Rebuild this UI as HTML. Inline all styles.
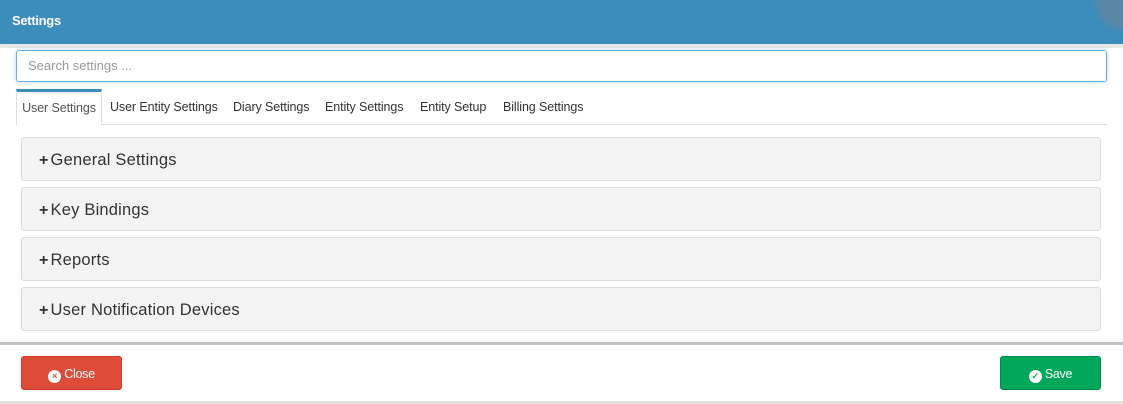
<!DOCTYPE html>
<html><head><style>
body{margin:0;width:1123px;height:404px;background:#fff;font-family:"Liberation Sans",sans-serif;position:relative;overflow:hidden}
.hdr{position:absolute;left:0;top:0;width:1123px;height:44px;background:#3c8dbc;color:#fff;font-weight:bold;font-size:13px;line-height:42px;padding-left:12px;box-sizing:border-box;letter-spacing:-0.3px}
.circ{position:absolute;left:1095px;top:-30px;width:60px;height:60px;border-radius:50%;background:#5a87a6;filter:blur(3px)}
.band{position:absolute;left:0;top:44px;width:1123px;height:4px;background:#e6e6e6}
.search{position:absolute;left:16px;top:50px;width:1091px;height:32px;border:1px solid #66afe9;border-radius:3px;box-sizing:border-box;box-shadow:0 0 4px rgba(102,175,233,.5);font-size:13px;color:#999;padding-left:11px;line-height:30px}
.tabs{position:absolute;left:16px;top:89px;width:1091px;height:36px;border-bottom:1px solid #ddd;box-sizing:border-box;font-size:12.5px;color:#333}
.tab{position:absolute;top:0;height:35px;line-height:36px;letter-spacing:-0.1px}
.act{left:0;width:86px;border-top:3px solid #3c8dbc;border-left:1px solid #ddd;border-right:1px solid #ddd;box-sizing:border-box;height:36px;background:#fff;line-height:32px;text-align:center;color:#555}
.p{position:absolute;left:21px;width:1080px;height:44px;background:#f4f4f4;border:1px solid #ddd;border-radius:3px;box-sizing:border-box;font-size:16.5px;color:#333;line-height:44px;padding-left:17px;letter-spacing:0.2px}
.p b{font-size:16px;margin-right:2px}
.line{position:absolute;left:0;top:342px;width:1123px;height:3px;background:#c2c2c2}
.btn{position:absolute;top:356px;width:101px;height:34px;border-radius:3px;color:#fff;font-size:12.5px;line-height:34px;text-align:center;box-sizing:border-box;letter-spacing:-0.3px}
.ic{display:inline-block;width:13px;height:13px;border-radius:50%;background:#fff;vertical-align:-1px;margin-right:3px;font-size:9px;line-height:13px;font-weight:bold;letter-spacing:0}
.bot{position:absolute;left:0;top:401px;width:1123px;height:3px;background:#e2e2e2}
</style></head><body>
<div class="hdr">Settings</div><div class="circ"></div>
<div class="band"></div>
<div class="search">Search settings ...</div>
<div class="tabs">
<div class="tab act">User Settings</div>
<div class="tab" style="left:94px">User Entity Settings</div>
<div class="tab" style="left:217px">Diary Settings</div>
<div class="tab" style="left:309px">Entity Settings</div>
<div class="tab" style="left:404px">Entity Setup</div>
<div class="tab" style="left:487px">Billing Settings</div>
</div>
<div class="p" style="top:137px"><b>+</b>General Settings</div>
<div class="p" style="top:187px"><b>+</b>Key Bindings</div>
<div class="p" style="top:237px"><b>+</b>Reports</div>
<div class="p" style="top:287px"><b>+</b>User Notification Devices</div>
<div class="line"></div>
<div class="btn" style="left:21px;background:#dd4b39;border:1px solid #d73925"><span class="ic" style="color:#dd4b39">×</span>Close</div>
<div class="btn" style="left:1000px;background:#00a65a;border:1px solid #008d4c"><span class="ic" style="color:#00a65a">✓</span>Save</div>
<div class="bot"></div>
</body></html>
